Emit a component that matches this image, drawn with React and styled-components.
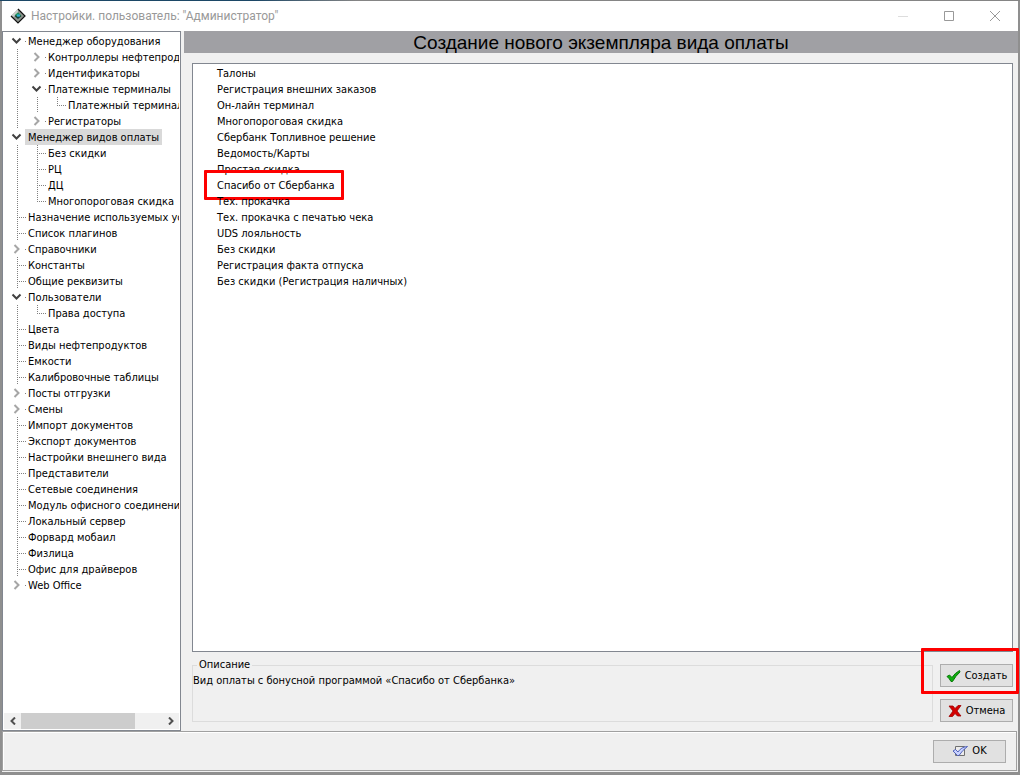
import React, { useState } from 'react'
import styled, { createGlobalStyle } from 'styled-components'

const GlobalStyle = createGlobalStyle`
  * {
    box-sizing: border-box;
  }
  body {
    margin: 0;
    font-family: 'DejaVu Sans Condensed', 'DejaVu Sans', sans-serif;
    font-stretch: condensed;
    font-size: 11px;
    line-height: 16px;
    color: #000;
  }
  button {
    font: inherit;
    color: inherit;
    padding: 0;
  }
`

const Desktop = styled.div`
  display: flex;
  min-height: 100vh;
  padding: 1px 2px 3px;
  background:
    linear-gradient(90deg, #1c4766 25%, #858585 35%) top / 100% 1px no-repeat,
    #8f8f8f;
`

const Window = styled.div`
  flex: 1;
  min-width: 0;
  display: flex;
  flex-direction: column;
  background: #f0f0f0;
`

const TitleBar = styled.header`
  display: flex;
  align-items: center;
  height: 30px;
  padding-left: 8px;
  background: #fff;
`

const WindowTitle = styled.span`
  flex: 1;
  margin-left: 5px;
  font-family: Roboto, 'Open Sans', sans-serif;
  font-stretch: normal;
  font-size: 12px;
  color: #999;
`

const CaptionButton = styled.button`
  display: flex;
  align-items: center;
  justify-content: center;
  width: 46px;
  height: 30px;
  border: 0;
  background: transparent;
`

const Main = styled.div`
  flex: 1;
  display: flex;
  gap: 3px;
`

const TreePanel = styled.nav`
  flex: none;
  display: flex;
  flex-direction: column;
  width: 179px;
  padding: 1px;
  border: 1px solid #828790;
  background: #fff;
`

const TreeList = styled.ul`
  flex: 1;
  margin: 0;
  padding: 0 0 0 1px;
  list-style: none;
  overflow: hidden;
`

const SubList = styled.ul`
  margin: 0;
  padding: 0;
  list-style: none;
`

const TreeRow = styled.div`
  display: flex;
  height: 16px;
  white-space: nowrap;
`

const GuideSvg = styled.svg`
  flex: none;
  overflow: visible;
`

const TreeLabel = styled.span`
  padding: 0 3px;
  line-height: 18px;
  background: ${(props) => (props.$selected ? '#d9d9d9' : 'transparent')};
`

const ScrollBar = styled.div`
  display: flex;
  height: 16px;
  background: #f0f0f0;
`

const ScrollArrow = styled.button`
  display: flex;
  align-items: center;
  justify-content: center;
  width: 17px;
  border: 0;
  background: transparent;
`

const ScrollTrack = styled.div`
  flex: 1;
`

const ScrollThumb = styled.div`
  width: 81%;
  height: 100%;
  background: #cdcdcd;
`

const Content = styled.main`
  flex: 1;
  min-width: 0;
  display: flex;
  flex-direction: column;
`

const Heading = styled.h1`
  margin: 0;
  height: 22px;
  font-family: 'Liberation Sans', Arial, sans-serif;
  font-stretch: normal;
  font-size: 19px;
  font-weight: 400;
  line-height: 24px;
  text-align: center;
  background: #a0a0a4;
`

const Body = styled.div`
  flex: 1;
  display: flex;
  flex-direction: column;
  padding: 10px 5px 9px 8px;
`

const PaymentList = styled.ul`
  flex: 1;
  margin: 0;
  padding: 2px 24px;
  list-style: none;
  border: 1px solid #828790;
  background: #fff;
`

const PaymentItem = styled.li`
  position: relative;
  width: max-content;
  height: 16px;
  cursor: default;
`

const Mark = styled.span`
  position: absolute;
  inset: ${(props) => props.$inset};
  border: 3px solid #fe0000;
  border-radius: 1px;
  pointer-events: none;
`

const BottomRow = styled.div`
  display: flex;
  gap: 7px;
  margin-top: 6px;
`

const Description = styled.fieldset`
  flex: 1;
  min-width: 0;
  height: 64px;
  margin: 0;
  padding: 0;
  border: 1px solid #dcdcdc;

  legend {
    margin-left: 4px;
    padding: 0 2px;
    line-height: 14px;
  }

  p {
    margin: 0;
    line-height: 18px;
  }
`

const Actions = styled.div`
  display: flex;
  flex-direction: column;
  justify-content: flex-end;
  gap: 12px;
`

const PushButton = styled.button`
  position: relative;
  display: flex;
  align-items: center;
  justify-content: center;
  gap: 4px;
  width: 73px;
  height: 23px;
  border: 1px solid #adadad;
  line-height: 20px;
  background: #e1e1e1;
`

const Footer = styled.footer`
  display: flex;
  justify-content: flex-end;
  align-items: center;
  height: 40px;
  margin: 0 1px 1px 0;
  padding-right: 10px;
  border: 1px solid #a0a0a0;
  box-shadow: inset 1px 1px #fff;
`

const treeNodes = [
  {
    label: 'Менеджер оборудования',
    children: [
      { label: 'Контроллеры нефтепродуктов', collapsed: true },
      { label: 'Идентификаторы', collapsed: true },
      { label: 'Платежные терминалы', children: [{ label: 'Платежный терминал' }] },
      { label: 'Регистраторы', collapsed: true },
    ],
  },
  {
    label: 'Менеджер видов оплаты',
    children: [
      { label: 'Без скидки' },
      { label: 'РЦ' },
      { label: 'ДЦ' },
      { label: 'Многопороговая скидка' },
    ],
  },
  { label: 'Назначение используемых устройств' },
  { label: 'Список плагинов' },
  { label: 'Справочники', collapsed: true },
  { label: 'Константы' },
  { label: 'Общие реквизиты' },
  { label: 'Пользователи', children: [{ label: 'Права доступа' }] },
  { label: 'Цвета' },
  { label: 'Виды нефтепродуктов' },
  { label: 'Емкости' },
  { label: 'Калибровочные таблицы' },
  { label: 'Посты отгрузки', collapsed: true },
  { label: 'Смены', collapsed: true },
  { label: 'Импорт документов' },
  { label: 'Экспорт документов' },
  { label: 'Настройки внешнего вида' },
  { label: 'Представители' },
  { label: 'Сетевые соединения' },
  { label: 'Модуль офисного соединения' },
  { label: 'Локальный сервер' },
  { label: 'Форвард мобаил' },
  { label: 'Физлица' },
  { label: 'Офис для драйверов' },
  { label: 'Web Office', collapsed: true },
]

const payments = [
  'Талоны',
  'Регистрация внешних заказов',
  'Он-лайн терминал',
  'Многопороговая скидка',
  'Сбербанк Топливное решение',
  'Ведомость/Карты',
  'Простая скидка',
  'Спасибо от Сбербанка',
  'Тех. прокачка',
  'Тех. прокачка с печатью чека',
  'UDS лояльность',
  'Без скидки',
  'Регистрация факта отпуска',
  'Без скидки (Регистрация наличных)',
]

// kind: blank | pass | tee | elbow | open | closed
const Guide = ({ kind }) => (
  <GuideSvg width="20" height="16" aria-hidden="true">
    <g stroke="#808080" strokeDasharray="1 1" fill="none">
      {(kind === 'pass' || kind === 'tee') && <path d="M12.5 0V16" />}
      {kind === 'elbow' && <path d="M12.5 0V8" />}
      {(kind === 'tee' || kind === 'elbow') && <path d="M12 8.5H21" />}
      {(kind === 'open' || kind === 'closed') && <path d="M20 8.5H21" />}
    </g>
    {kind === 'open' && <path d="M7.5 5.5L11.5 9.500L15.500 5.500" fill="none" stroke="#404040" strokeWidth="2" />}
    {kind === 'closed' && <path d="M9.500 4L13.500 8L9.500 12" fill="none" stroke="#a6a6a6" strokeWidth="2" />}
  </GuideSvg>
)

const nodeKind = (node, isLast) => {
  if (node.children) return 'open'
  if (node.collapsed) return 'closed'
  return isLast ? 'elbow' : 'tee'
}

const Branch = ({ nodes, trail, selected, onSelect }) =>
  nodes.map((node, i) => {
    const isLast = i === nodes.length - 1
    return (
      <li key={node.label}>
        <TreeRow onClick={() => onSelect(node.label)}>
          {trail.map((kind, k) => (
            <Guide key={k} kind={kind} />
          ))}
          <Guide kind={nodeKind(node, isLast)} />
          <TreeLabel $selected={node.label === selected}>{node.label}</TreeLabel>
        </TreeRow>
        {node.children && (
          <SubList>
            <Branch
              nodes={node.children}
              trail={[...trail, isLast ? 'blank' : 'pass']}
              selected={selected}
              onSelect={onSelect}
            />
          </SubList>
        )}
      </li>
    )
  })

const AppIcon = () => (
  <svg width="16" height="16" viewBox="0 0 16 16" aria-hidden="true">
    <path d="M8 1L15 8L8 15L1 8Z" fill="#8d948d" />
    <path d="M8 1L1 8L4 9L8 5Z" fill="#c9cdc9" />
    <path d="M8 1L15 8L8 15L1 8" fill="none" stroke="#111" strokeWidth="1.2" />
    <path d="M4.500 8L8 4.500L11.500 8L8 11Z" fill="#123c38" />
    <path d="M5 7L8 4.500L11 7.500L8 9Z" fill="#1d9a5c" />
    <path d="M7 6.500h3v2h-3z" fill="#2fa8dc" />
  </svg>
)

const CheckIcon = () => (
  <svg width="15" height="14" viewBox="0 0 15 14" aria-hidden="true">
    <path d="M1 7.500L3.500 6L6 8.500Q9 4 13.500 1.500L14 3Q9.500 7 6.500 12.500H5Q3.500 9.500 1 7.500Z" fill="#0fae0f" stroke="#067806" strokeWidth="1" />
  </svg>
)

const CrossIcon = () => (
  <svg width="14" height="14" viewBox="0 0 14 14" aria-hidden="true">
    <path d="M1 2H5L7 4.500L10 1.500H13L9 7L13 12H9.500L7 9.500L4.500 12.500H1L5 7Z" fill="#d40000" stroke="#9c0000" strokeWidth="0.8" />
  </svg>
)

const OkIcon = () => (
  <svg width="16" height="12" viewBox="0 0 16 12" aria-hidden="true">
    <path d="M3.500 1.500H12.500V10.500H3.500Z" fill="#ececec" stroke="#707070" />
    <path d="M1 6L3.500 4.500L6 7Q9 2 15.500 1.500Q10.500 5 7 10.500H5.500Z" fill="#c8d2ff" stroke="#4456b4" strokeWidth="0.9" />
  </svg>
)

const App = () => {
  const [selected, setSelected] = useState('Менеджер видов оплаты')

  return (
    <Desktop>
      <GlobalStyle />
      <Window>
        <TitleBar>
          <AppIcon />
          <WindowTitle>Настройки. пользователь: "Администратор"</WindowTitle>
          <CaptionButton aria-label="Свернуть">
            <svg width="10" height="10"><path d="M0 5.500H10" stroke="#ddd" /></svg>
          </CaptionButton>
          <CaptionButton aria-label="Развернуть">
            <svg width="10" height="10"><path d="M0.500 0.500H9.500V9.500H0.500Z" fill="none" stroke="#999" /></svg>
          </CaptionButton>
          <CaptionButton aria-label="Закрыть">
            <svg width="10" height="10"><path d="M0 0L10 10M10 0L0 10" stroke="#999" /></svg>
          </CaptionButton>
        </TitleBar>
        <Main>
          <TreePanel>
            <TreeList>
              <Branch nodes={treeNodes} trail={[]} selected={selected} onSelect={setSelected} />
            </TreeList>
            <ScrollBar>
              <ScrollArrow aria-label="Влево">
                <svg width="6" height="8"><path d="M5 0.500L1.500 4L5 7.500" fill="none" stroke="#505050" strokeWidth="2" /></svg>
              </ScrollArrow>
              <ScrollTrack>
                <ScrollThumb />
              </ScrollTrack>
              <ScrollArrow aria-label="Вправо">
                <svg width="6" height="8"><path d="M1 0.500L4.500 4L1 7.500" fill="none" stroke="#505050" strokeWidth="2" /></svg>
              </ScrollArrow>
            </ScrollBar>
          </TreePanel>
          <Content>
            <Heading>Создание нового экземпляра вида оплаты</Heading>
            <Body>
              <PaymentList>
                {payments.map((name) => (
                  <PaymentItem key={name}>
                    {name}
                    {name === 'Спасибо от Сбербанка' && <Mark $inset="-8px -9px -6px -13px" />}
                  </PaymentItem>
                ))}
              </PaymentList>
              <BottomRow>
                <Description>
                  <legend>Описание</legend>
                  <p>Вид оплаты с бонусной программой «Спасибо от Сбербанка»</p>
                </Description>
                <Actions>
                  <PushButton>
                    <CheckIcon />
                    Создать
                    <Mark $inset="-17px -7px -8px -20px" />
                  </PushButton>
                  <PushButton>
                    <CrossIcon />
                    Отмена
                  </PushButton>
                </Actions>
              </BottomRow>
            </Body>
          </Content>
        </Main>
        <Footer>
          <PushButton>
            <OkIcon />
            OK
          </PushButton>
        </Footer>
      </Window>
    </Desktop>
  )
}

export default App
